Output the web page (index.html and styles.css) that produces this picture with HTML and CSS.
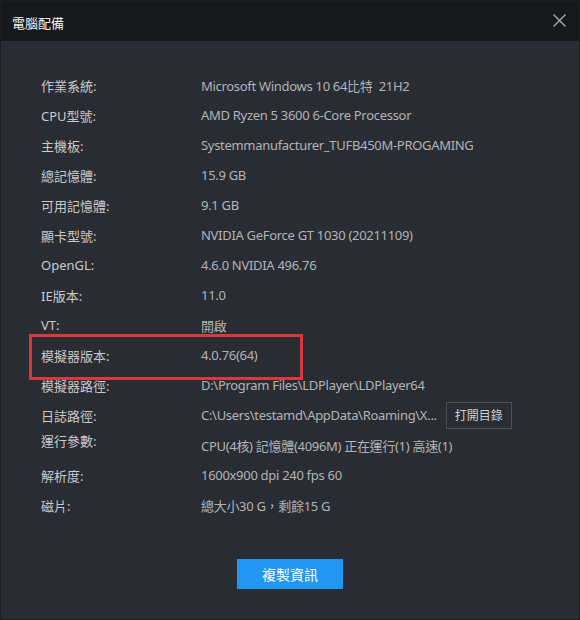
FILE: index.html
```html
<!DOCTYPE html>
<html lang="zh-Hant">

<head>
    <meta charset="UTF-8">
    <meta name="viewport" content="width=device-width, initial-scale=1.0">
    <title>電腦配備</title>
    <link rel="stylesheet" href="styles.css">
</head>

<body>

    <div class="win">
        <div class="head">
            <span class="title">電腦配備</span>
            <svg class="close" width="13" height="13" viewBox="0 0 13 13">
                <path d="M0.5 0.5 L12.5 12.5 M12.5 0.5 L0.5 12.5" stroke="#a9abaf" stroke-width="1.4" fill="none" />
            </svg>
        </div>

        <div class="main">
            <div class="info">
                <div class="row"><span class="key">作業系統:</span><span class="val">Microsoft Windows 10 64比特&nbsp;&nbsp;21H2</span></div>
                <div class="row"><span class="key">CPU型號:</span><span class="val">AMD Ryzen 5 3600 6-Core Processor</span></div>
                <div class="row"><span class="key">主機板:</span><span class="val">Systemmanufacturer_TUFB450M-PROGAMING</span></div>
                <div class="row"><span class="key">總記憶體:</span><span class="val">15.9 GB</span></div>
                <div class="row"><span class="key">可用記憶體:</span><span class="val">9.1 GB</span></div>
                <div class="row"><span class="key">顯卡型號:</span><span class="val">NVIDIA GeForce GT 1030 (20211109)</span></div>
                <div class="row"><span class="key">OpenGL:</span><span class="val">4.6.0 NVIDIA 496.76</span></div>
                <div class="row"><span class="key">IE版本:</span><span class="val">11.0</span></div>
                <div class="row"><span class="key">VT:</span><span class="val">開啟</span></div>
                <div class="row marked"><span class="key">模擬器版本:</span><span class="val">4.0.76(64)</span></div>
                <div class="row"><span class="key">模擬器路徑:</span><span class="val">D:\Program Files\LDPlayer\LDPlayer64</span></div>
                <div class="row"><span class="key">日誌路徑:</span><span class="val">C:\Users\testamd\AppData\Roaming\X...</span><button class="open">打開目錄</button></div>
                <div class="row"><span class="key up">運行參數:</span><span class="val">CPU(4核) 記憶體(4096M) 正在運行(1) 高速(1)</span></div>
                <div class="row"><span class="key">解析度:</span><span class="val">1600x900 dpi 240 fps 60</span></div>
                <div class="row"><span class="key">磁片:</span><span class="val">總大小30 G，剩餘15 G</span></div>
            </div>

            <div class="foot">
                <button class="copy">複製資訊</button>
            </div>
        </div>
    </div>

</body>

</html>
```

FILE: styles.css
```css
* {
    margin: 0;
    padding: 0;
    box-sizing: border-box;
    font-family: 'Noto Sans', 'Noto Sans CJK TC', sans-serif;
}

body {
    background-color: #1c1d21;
}

.win {
    width: 580px;
    height: 620px;
    display: flex;
    flex-direction: column;
    border: 1px solid #1c1d21;
    background-color: #292c32;
}

.head {
    height: 40px;
    background-color: #17181c;
    display: flex;
    align-items: center;
    justify-content: space-between;
    padding: 0 13px 0 11px;
}

.title {
    color: #f2f2f2;
    font-size: 13px;
    padding-top: 3px;
}

.close {
    display: block;
    margin-top: -1px;
}

.main {
    flex: 1;
    display: flex;
    flex-direction: column;
    padding-top: 29px;
}

.info {
    display: flex;
    flex-direction: column;
}

.row {
    height: 30px;
    display: flex;
    align-items: center;
    padding-left: 40px;
    font-size: 13px;
    position: relative;
}

.key {
    width: 160px;
    color: #c9cacc;
    flex-shrink: 0;
}

.key.up {
    padding-bottom: 10px;
}

.val {
    color: #b3b4b7;
    white-space: nowrap;
    letter-spacing: -0.3px;
}

.marked::after {
    content: "";
    position: absolute;
    left: 28px;
    top: -6px;
    width: 268px;
    height: 40px;
    border: 3px solid #d8383e;
}

.open {
    margin-left: 9px;
    height: 27px;
    padding: 0 8px;
    background-color: #292c32;
    border: 1px solid #4b4f59;
    color: #d0d1d3;
    font-size: 12px;
}

.foot {
    display: flex;
    justify-content: center;
    padding-top: 39px;
}

.copy {
    width: 106px;
    height: 30px;
    border: none;
    background-color: #2196f3;
    color: #ffffff;
    font-size: 14px;
}
```
